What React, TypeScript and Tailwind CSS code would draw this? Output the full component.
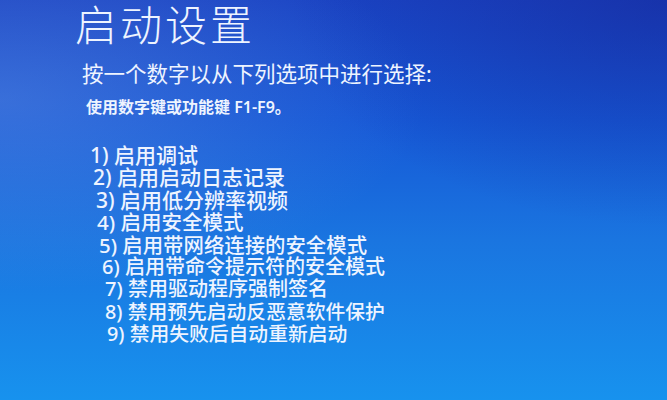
import React from 'react';

const OPTIONS = [
  { n: '1)', text: '启用调试', indent: 'pl-[0px]', size: 'text-[21px]' },
  { n: '2)', text: '启用启动日志记录', indent: 'pl-[3px]', size: 'text-[21px]' },
  { n: '3)', text: '启用低分辨率视频', indent: 'pl-[6px]', size: 'text-[21px]' },
  { n: '4)', text: '启用安全模式', indent: 'pl-[7px]', size: 'text-[20.5px]' },
  { n: '5)', text: '启用带网络连接的安全模式', indent: 'pl-[9px]', size: 'text-[20.4px]' },
  { n: '6)', text: '启用带命令提示符的安全模式', indent: 'pl-[12px]', size: 'text-[20px]' },
  { n: '7)', text: '禁用驱动程序强制签名', indent: 'pl-[15px]', size: 'text-[20px]' },
  { n: '8)', text: '禁用预先启动反恶意软件保护', indent: 'pl-[15px]', size: 'text-[19.8px]' },
  { n: '9)', text: '禁用失败后自动重新启动', indent: 'pl-[17px]', size: 'text-[19.8px]' },
];

const App = () => {
  return (
    <div
      className="relative w-[667px] h-[400px] overflow-hidden text-[#eef4ff] bg-[linear-gradient(180deg,#1a44c4_0%,#1658d6_30%,#1a75e0_60%,#1792ee_100%)]"
      style={{ fontFamily: '"Noto Sans", "Noto Sans CJK SC", sans-serif' }}
    >
      {/* light haze on the left, darker top-right corner */}
      <div className="absolute inset-0 bg-[radial-gradient(ellipse_at_0%_25%,rgba(120,160,230,0.35),transparent_45%)]" />
      <div className="absolute inset-0 bg-[radial-gradient(ellipse_at_100%_0%,rgba(20,30,140,0.45),transparent_40%)]" />

      <div className="relative flex flex-col pl-[75px]">
        <h1 className="text-[42px] leading-[50px] font-light tracking-[3px]">启动设置</h1>

        <div className="mt-[11px] pl-[7px] text-[21.5px] leading-[26px]">按一个数字以从下列选项中进行选择:</div>

        <div className="mt-[10px] pl-[11px] text-[16px] leading-[21px] font-semibold">使用数字键或功能键 F1-F9。</div>

        <ul className="mt-[26px] pl-[15px] flex flex-col">
          {OPTIONS.map((o) => (
            <li key={o.n} className={`${o.indent} ${o.size} leading-[22.4px] font-medium whitespace-nowrap`}>
              {o.n} {o.text}
            </li>
          ))}
        </ul>
      </div>
    </div>
  );
};

export default App;
